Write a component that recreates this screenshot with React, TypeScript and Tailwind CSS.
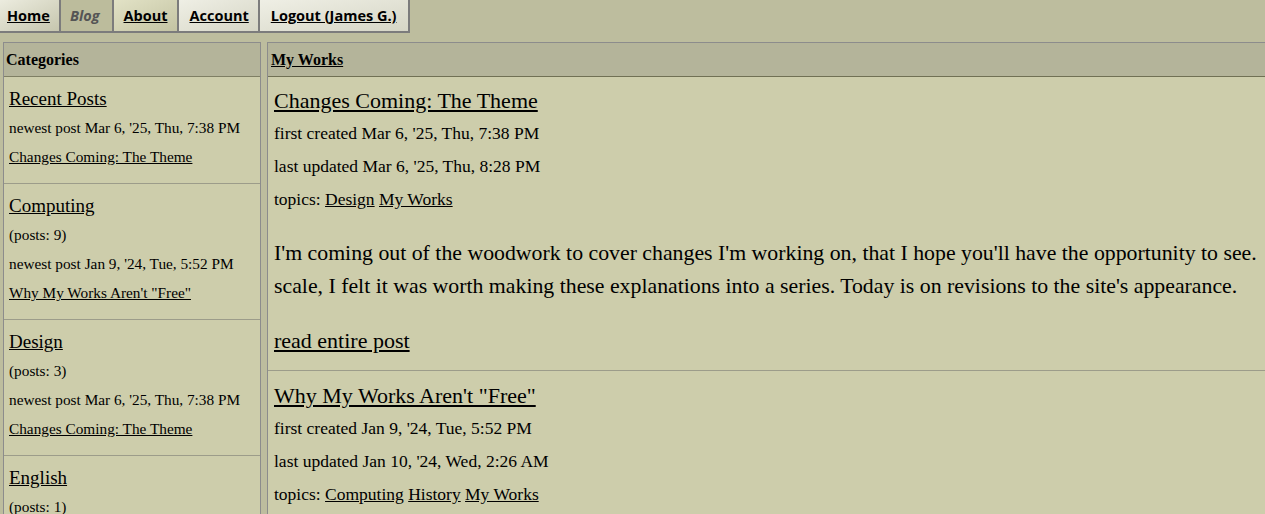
import React from "react";

interface Category {
  name: string;
  posts?: number;
  newest: string;
  latest: string;
}

interface Post {
  title: string;
  created: string;
  updated: string;
  topics: string[];
  body?: string[];
}

const categories: Category[] = [
  { name: "Recent Posts", newest: "Mar 6, '25, Thu, 7:38 PM", latest: "Changes Coming: The Theme" },
  { name: "Computing", posts: 9, newest: "Jan 9, '24, Tue, 5:52 PM", latest: 'Why My Works Aren\'t "Free"' },
  { name: "Design", posts: 3, newest: "Mar 6, '25, Thu, 7:38 PM", latest: "Changes Coming: The Theme" },
  { name: "English", posts: 1, newest: "Feb 2, '23, Thu, 4:10 PM", latest: "On Words" },
];

const posts: Post[] = [
  {
    title: "Changes Coming: The Theme",
    created: "Mar 6, '25, Thu, 7:38 PM",
    updated: "Mar 6, '25, Thu, 8:28 PM",
    topics: ["Design", "My Works"],
    body: [
      "I'm coming out of the woodwork to cover changes I'm working on, that I hope you'll have the opportunity to see.",
      "scale, I felt it was worth making these explanations into a series. Today is on revisions to the site's appearance.",
    ],
  },
  {
    title: 'Why My Works Aren\'t "Free"',
    created: "Jan 9, '24, Tue, 5:52 PM",
    updated: "Jan 10, '24, Wed, 2:26 AM",
    topics: ["Computing", "History", "My Works"],
  },
];

const tabs = [
  { label: "Home", cls: "pl-[7px] pr-[9px] bg-linear-to-br from-[#ececdf] to-[#c6c6ae]" },
  { label: "Blog", cls: "pl-[9px] pr-[12px] bg-[#bcbc9c] text-[#555] italic", current: true },
  { label: "About", cls: "pl-[10px] pr-[9px] bg-linear-to-br from-[#e2e2c6] to-[#c4c4a3]" },
  { label: "Account", cls: "pl-[11px] pr-[9px] bg-linear-to-br from-[#efefe5] to-[#d6d6c6]" },
  { label: "Logout (James G.)", cls: "pl-[11px] pr-[12px] bg-linear-to-br from-[#efefe5] to-[#d6d6c6]" },
];

const App: React.FC = () => {
  return (
    <div className="h-screen w-full overflow-hidden bg-[#bdbd9e] font-['Liberation_Serif',serif] text-black">
      <nav className="flex font-['Open_Sans',sans-serif] text-[14.5px] font-bold">
        {tabs.map((t) => (
          <a
            key={t.label}
            href="#"
            className={`flex h-[33px] items-center border-r-2 border-b-2 border-[#7c7c7c] ${
              t.current ? "" : "underline"
            } ${t.cls}`}
          >
            {t.label}
          </a>
        ))}
      </nav>

      <div className="mt-[9px] flex items-start gap-[6px] pl-[3px]">
        <aside className="w-[258px] shrink-0 border border-[#8c8c8c] bg-[#cdcdab]">
          <div className="flex h-[34px] items-center border-b border-[#7f7f64] bg-[#b4b49a] pl-[2px] text-[16px] font-bold">
            Categories
          </div>
          {categories.map((c, i) => (
            <div
              key={c.name}
              className={`px-[5px] pt-[7px] pb-[12px] text-[15.3px] leading-[29px] ${
                i > 0 ? "border-t border-[#9c9c8a]" : ""
              }`}
            >
              <a href="#" className="block text-[19px] underline">
                {c.name}
              </a>
              {c.posts !== undefined && <div>(posts: {c.posts})</div>}
              <div>newest post {c.newest}</div>
              <a href="#" className="block underline">
                {c.latest}
              </a>
            </div>
          ))}
        </aside>

        <main className="w-[1400px] shrink-0 border border-[#8c8c8c] bg-[#cdcdab]">
          <div className="flex h-[34px] items-center border-b border-[#707054] bg-[#b4b49a] pl-[3px] text-[16px] font-bold">
            <a href="#" className="underline">
              My Works
            </a>
          </div>
          {posts.map((p, i) => (
            <article
              key={p.title}
              className={`px-[6px] pb-[13px] text-[17.5px] leading-[33px] ${
                i > 0 ? "border-t border-[#9c9c8a] pt-[8px]" : "pt-[7px]"
              }`}
            >
              <a href="#" className="block text-[22px] underline">
                {p.title}
              </a>
              <div>first created {p.created}</div>
              <div>last updated {p.updated}</div>
              <div>
                topics:{" "}
                {p.topics.map((tp, j) => (
                  <React.Fragment key={tp}>
                    {j > 0 && " "}
                    <a href="#" className="underline">
                      {tp}
                    </a>
                  </React.Fragment>
                ))}
              </div>
              {p.body && (
                <>
                  <p className="mt-[21px] text-[21.8px] whitespace-nowrap">
                    {p.body.map((line) => (
                      <span key={line} className="block">
                        {line}
                      </span>
                    ))}
                  </p>
                  <a href="#" className="mt-[21px] block text-[22px] underline">
                    read entire post
                  </a>
                </>
              )}
            </article>
          ))}
        </main>
      </div>
    </div>
  );
};

export default App;
